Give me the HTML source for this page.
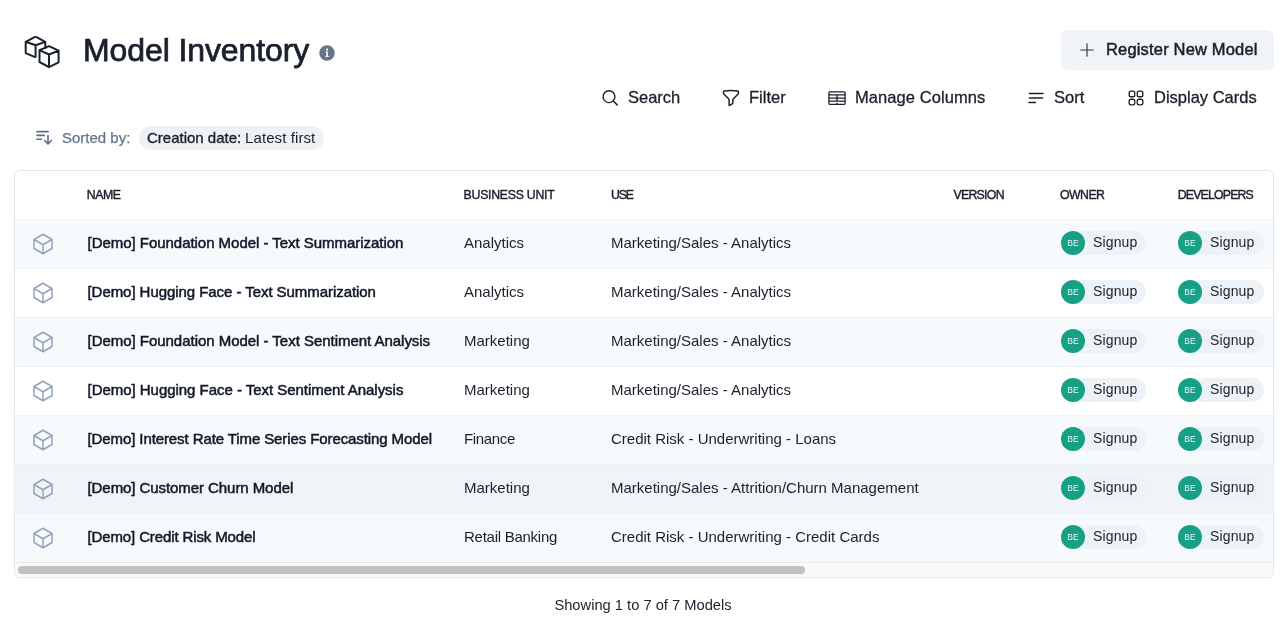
<!DOCTYPE html>
<html>
<head>
<meta charset="utf-8">
<style>
*{box-sizing:border-box;margin:0;padding:0}
html,body{width:1288px;height:636px;overflow:hidden;background:#fff}
body{font-family:"Liberation Sans",sans-serif;color:#1a202c;position:relative}
.a{position:absolute;white-space:nowrap;line-height:1}
svg{position:absolute;overflow:visible}
.title{left:83px;top:34px;font-size:32px;letter-spacing:-0.1px;-webkit-text-stroke:0.75px #1a202c;color:#1a202c}
.btn{left:1061px;top:30px;width:213px;height:40px;background:#f0f4f9;border-radius:7px}
.btxt{left:1106px;top:41px;font-size:16.5px;letter-spacing:0.17px;-webkit-text-stroke:0.5px #1a202c}
.tb{top:89px;font-size:16.5px;-webkit-text-stroke:0.3px #1a202c}
.sb{left:62px;top:130px;font-size:15px;color:#64748b;-webkit-text-stroke:0.25px #64748b}
.pill{left:139px;top:126px;width:185px;height:24px;background:#edf2f7;border-radius:12px}
.cd{left:147px;top:130px;font-size:15px;-webkit-text-stroke:0.35px #1a202c}
.lf{left:245px;top:130px;font-size:15px;letter-spacing:0.1px;color:#1a202c}
.tbl{left:14px;top:170px;width:1260px;height:408px;border:1px solid #e2e8f0;border-radius:6px;overflow:hidden;background:#fff}
.row{position:absolute;left:0;width:1258px;height:49px;border-top:1px solid #edf2f7}
.hd{top:191px;font-size:12.3px;letter-spacing:-0.15px;-webkit-text-stroke:0.4px #1a202c}
.nm{font-size:15px;color:#111827;-webkit-text-stroke:0.5px #111827;letter-spacing:-0.07px}
.tx{font-size:15px;color:#1a202c}
.chip{position:absolute;height:24px;border-radius:12px;background:#edf2f7}
.av{position:absolute;width:24px;height:24px;border-radius:12px;background:#17a086;color:#e8f7f2;font-size:8.5px;line-height:24px;text-align:center}
.sg{font-size:14px;letter-spacing:0.15px;color:#1a202c}
.foot{left:-1px;width:1288px;text-align:center;top:598px;font-size:14.7px;color:#1a202c}
.sbar{position:absolute;left:0;top:391px;width:1258px;height:15px;background:#fafafa;border-top:1px solid #e8e8e8}
.thumb{position:absolute;left:3px;top:3px;width:787px;height:8px;border-radius:4px;background:#c1c1c1}
</style>
</head>
<body>
<div id="wrap" style="position:absolute;left:0;top:0;width:1288px;height:636px;will-change:transform">
<!-- header icon -->
<svg width="40" height="40" style="left:22px;top:32px" viewBox="22 32 40 40">
<g fill="none" stroke="#1a202c" stroke-width="2" stroke-linejoin="round">
<path d="M35.6 36.7 L25.7 41.8 L25.7 53.1 L35.6 57.4 M35.6 36.7 L45.3 41.9 L45.3 49 M25.7 41.8 L35.6 45.3 L45.3 41.9 M35.6 45.3 L35.6 57.4"/>
<path d="M49 46.1 L39.5 50.2 L39.5 62 L49 67.1 L58.6 62.3 L58.6 50.6 Z M39.5 50.2 L49 54.5 L58.6 50.6 M49 54.5 L49 67.1"/>
</g>
</svg>
<div class="a title">Model Inventory</div>
<svg width="16" height="16" style="left:319px;top:45px" viewBox="0 0 16 16">
<circle cx="8" cy="8" r="7.7" fill="#64748b"/>
<path d="M6.6 6.4h2.3v4.6h0.9v1h-3.4v-1h0.9v-3.6h-0.7z" fill="#fff"/>
<circle cx="8.1" cy="4.6" r="1.1" fill="#fff"/>
</svg>

<div class="a btn"></div>
<svg width="20" height="20" style="left:1077px;top:39.6px" viewBox="0 0 24 24"><path d="M12 4.5v15m7.5-7.5h-15" fill="none" stroke="#2d3748" stroke-width="1.4" stroke-linecap="round" stroke-linejoin="round"/></svg>
<div class="a btxt">Register New Model</div>

<!-- toolbar -->
<svg width="18" height="18" style="left:601px;top:89px" viewBox="0 0 18 18">
<circle cx="8" cy="7.7" r="5.9" fill="none" stroke="#1a202c" stroke-width="1.4"/>
<path d="M12.3 12L16.2 15.9" stroke="#1a202c" stroke-width="1.5" stroke-linecap="round"/>
</svg>
<div class="a tb" style="left:628px">Search</div>
<svg width="20" height="20" style="left:721.2px;top:87.8px" viewBox="0 0 24 24"><path d="M12 3c2.755 0 5.455.232 8.083.678.533.09.917.556.917 1.096v1.044a2.25 2.25 0 01-.659 1.591l-5.432 5.432a2.25 2.25 0 00-.659 1.591v2.927a2.25 2.25 0 01-1.244 2.013L9.75 21v-6.568a2.25 2.25 0 00-.659-1.591L3.659 7.409A2.25 2.25 0 013 5.818V4.774c0-.54.384-1.006.917-1.096A48.32 48.32 0 0112 3z" fill="none" stroke="#1a202c" stroke-width="1.8" stroke-linecap="round" stroke-linejoin="round"/></svg>
<div class="a tb" style="left:749px">Filter</div>
<svg width="20" height="20" style="left:827.05px;top:87.97px" viewBox="0 0 24 24"><path d="M3.375 19.5h17.25m-17.25 0a1.125 1.125 0 01-1.125-1.125M3.375 19.5h7.5c.621 0 1.125-.504 1.125-1.125m-9.75 0V5.625m0 12.75v-1.5c0-.621.504-1.125 1.125-1.125m18.375 2.625V5.625m0 12.75c0 .621-.504 1.125-1.125 1.125m1.125-1.125v-1.5c0-.621-.504-1.125-1.125-1.125m0 3.75h-7.5A1.125 1.125 0 0112 18.375m9.75-12.75c0-.621-.504-1.125-1.125-1.125H3.375c-.621 0-1.125.504-1.125 1.125m19.5 0v1.5c0 .621-.504 1.125-1.125 1.125M2.25 5.625v1.5c0 .621.504 1.125 1.125 1.125m0 0h17.25m-17.25 0h7.5c.621 0 1.125.504 1.125 1.125M3.375 8.25c-.621 0-1.125.504-1.125 1.125v1.5c0 .621.504 1.125 1.125 1.125m17.25-3.75h-7.5c-.621 0-1.125.504-1.125 1.125m8.625-1.125c.621 0 1.125.504 1.125 1.125v1.5c0 .621-.504 1.125-1.125 1.125m-17.25 0h7.5m-7.5 0c-.621 0-1.125.504-1.125 1.125v1.5c0 .621.504 1.125 1.125 1.125M12 10.875v-1.5m0 1.5c0 .621-.504 1.125-1.125 1.125M12 10.875c0 .621.504 1.125 1.125 1.125m-2.25 0c.621 0 1.125.504 1.125 1.125M13.125 12h7.5m-7.5 0c-.621 0-1.125.504-1.125 1.125M20.625 12c.621 0 1.125.504 1.125 1.125v1.5c0 .621-.504 1.125-1.125 1.125m-17.25 0h7.5M12 14.625v-1.5m0 1.5c0 .621-.504 1.125-1.125 1.125m1.125-1.125c0 .621.504 1.125 1.125 1.125m0 0h7.5" fill="none" stroke="#1a202c" stroke-width="1.5" stroke-linecap="round" stroke-linejoin="round"/></svg>
<div class="a tb" style="left:855px;letter-spacing:0.08px">Manage Columns</div>
<svg width="18" height="18" style="left:1027px;top:88px" viewBox="0 0 18 18">
<path d="M2.4 5.5H16M2.4 9.9H15.6M1.9 14.4H8.4" stroke="#1a202c" stroke-width="1.5" stroke-linecap="round" fill="none"/>
</svg>
<div class="a tb" style="left:1054px">Sort</div>
<svg width="20" height="20" style="left:1126.1px;top:88.3px" viewBox="0 0 24 24"><path d="M3.75 6A2.25 2.25 0 016 3.75h2.25A2.25 2.25 0 0110.5 6v2.25a2.25 2.25 0 01-2.25 2.25H6a2.25 2.25 0 01-2.25-2.25V6zM3.75 15.75A2.25 2.25 0 016 13.5h2.25a2.25 2.25 0 012.25 2.25V18a2.25 2.25 0 01-2.25 2.25H6A2.25 2.25 0 013.75 18v-2.25zM13.5 6a2.25 2.25 0 012.25-2.25H18A2.25 2.25 0 0120.25 6v2.25A2.25 2.25 0 0118 10.5h-2.25a2.25 2.25 0 01-2.25-2.25V6zM13.5 15.75a2.25 2.25 0 012.25-2.25H18a2.25 2.25 0 012.25 2.25V18A2.25 2.25 0 0118 20.25h-2.25A2.25 2.25 0 0113.5 18v-2.25z" fill="none" stroke="#1a202c" stroke-width="1.55" stroke-linecap="round" stroke-linejoin="round"/></svg>
<div class="a tb" style="left:1154px">Display Cards</div>

<!-- sorted by -->
<svg width="20" height="18" style="left:34px;top:128px" viewBox="0 0 20 18">
<g fill="none" stroke="#5f6f88" stroke-width="1.6" stroke-linecap="round" stroke-linejoin="round">
<path d="M2.9 3.6H14.2M2.9 7.4H10.2M2.9 11.2H7.4M14 7.6V15.8M10.6 12.5L14 15.9L17.4 12.5"/>
</g>
</svg>
<div class="a sb">Sorted by:</div>
<div class="a pill"></div>
<div class="a cd">Creation date:</div>
<div class="a lf">Latest first</div>

<!-- table -->
<div class="a tbl" id="tbl">
<div class="a hd" style="left:71.7px;top:18px;letter-spacing:-0.42px">NAME</div>
<div class="a hd" style="left:448.6px;top:18px;letter-spacing:-0.26px">BUSINESS UNIT</div>
<div class="a hd" style="left:596.1px;top:18px;letter-spacing:-1.25px">USE</div>
<div class="a hd" style="left:938.5px;top:18px;letter-spacing:-0.72px">VERSION</div>
<div class="a hd" style="left:1045.0px;top:18px;letter-spacing:-0.55px">OWNER</div>
<div class="a hd" style="left:1162.8px;top:18px;letter-spacing:-0.82px">DEVELOPERS</div>
<div class="row" style="top:48px;background:#f7fafc"><svg width="24" height="24" style="left:16.2px;top:12.3px" viewBox="0 0 24 24"><path d="M21 7.5l-9-5.25L3 7.5m18 0l-9 5.25m9-5.25v9l-9 5.25M3 7.5l9 5.25M3 7.5v9l9 5.25m0-9v9" fill="none" stroke="#94a3b8" stroke-width="1.5" stroke-linecap="round" stroke-linejoin="round"/></svg><div class="a nm" style="left:72.5px;top:14.5px;letter-spacing:-0.035px">[Demo] Foundation Model - Text Summarization</div><div class="a tx" style="left:449px;top:14.5px;letter-spacing:0px">Analytics</div><div class="a tx" style="left:596px;top:14.5px">Marketing/Sales - Analytics</div><div class="chip" style="left:1046px;top:11px;width:85px"></div><div class="av" style="left:1046px;top:11px">BE</div><div class="a sg" style="left:1078px;top:15px">Signup</div><div class="chip" style="left:1163px;top:11px;width:86px"></div><div class="av" style="left:1163px;top:11px">BE</div><div class="a sg" style="left:1195px;top:15px">Signup</div></div>
<div class="row" style="top:97px;background:#fff"><svg width="24" height="24" style="left:16.2px;top:12.3px" viewBox="0 0 24 24"><path d="M21 7.5l-9-5.25L3 7.5m18 0l-9 5.25m9-5.25v9l-9 5.25M3 7.5l9 5.25M3 7.5v9l9 5.25m0-9v9" fill="none" stroke="#94a3b8" stroke-width="1.5" stroke-linecap="round" stroke-linejoin="round"/></svg><div class="a nm" style="left:72.5px;top:14.5px;letter-spacing:-0.057px">[Demo] Hugging Face - Text Summarization</div><div class="a tx" style="left:449px;top:14.5px;letter-spacing:0px">Analytics</div><div class="a tx" style="left:596px;top:14.5px">Marketing/Sales - Analytics</div><div class="chip" style="left:1046px;top:11px;width:85px"></div><div class="av" style="left:1046px;top:11px">BE</div><div class="a sg" style="left:1078px;top:15px">Signup</div><div class="chip" style="left:1163px;top:11px;width:86px"></div><div class="av" style="left:1163px;top:11px">BE</div><div class="a sg" style="left:1195px;top:15px">Signup</div></div>
<div class="row" style="top:146px;background:#f7fafc"><svg width="24" height="24" style="left:16.2px;top:12.3px" viewBox="0 0 24 24"><path d="M21 7.5l-9-5.25L3 7.5m18 0l-9 5.25m9-5.25v9l-9 5.25M3 7.5l9 5.25M3 7.5v9l9 5.25m0-9v9" fill="none" stroke="#94a3b8" stroke-width="1.5" stroke-linecap="round" stroke-linejoin="round"/></svg><div class="a nm" style="left:72.5px;top:14.5px;letter-spacing:-0.030px">[Demo] Foundation Model - Text Sentiment Analysis</div><div class="a tx" style="left:449px;top:14.5px;letter-spacing:0px">Marketing</div><div class="a tx" style="left:596px;top:14.5px">Marketing/Sales - Analytics</div><div class="chip" style="left:1046px;top:11px;width:85px"></div><div class="av" style="left:1046px;top:11px">BE</div><div class="a sg" style="left:1078px;top:15px">Signup</div><div class="chip" style="left:1163px;top:11px;width:86px"></div><div class="av" style="left:1163px;top:11px">BE</div><div class="a sg" style="left:1195px;top:15px">Signup</div></div>
<div class="row" style="top:195px;background:#fff"><svg width="24" height="24" style="left:16.2px;top:12.3px" viewBox="0 0 24 24"><path d="M21 7.5l-9-5.25L3 7.5m18 0l-9 5.25m9-5.25v9l-9 5.25M3 7.5l9 5.25M3 7.5v9l9 5.25m0-9v9" fill="none" stroke="#94a3b8" stroke-width="1.5" stroke-linecap="round" stroke-linejoin="round"/></svg><div class="a nm" style="left:72.5px;top:14.5px;letter-spacing:-0.034px">[Demo] Hugging Face - Text Sentiment Analysis</div><div class="a tx" style="left:449px;top:14.5px;letter-spacing:0px">Marketing</div><div class="a tx" style="left:596px;top:14.5px">Marketing/Sales - Analytics</div><div class="chip" style="left:1046px;top:11px;width:85px"></div><div class="av" style="left:1046px;top:11px">BE</div><div class="a sg" style="left:1078px;top:15px">Signup</div><div class="chip" style="left:1163px;top:11px;width:86px"></div><div class="av" style="left:1163px;top:11px">BE</div><div class="a sg" style="left:1195px;top:15px">Signup</div></div>
<div class="row" style="top:244px;background:#f7fafc"><svg width="24" height="24" style="left:16.2px;top:12.3px" viewBox="0 0 24 24"><path d="M21 7.5l-9-5.25L3 7.5m18 0l-9 5.25m9-5.25v9l-9 5.25M3 7.5l9 5.25M3 7.5v9l9 5.25m0-9v9" fill="none" stroke="#94a3b8" stroke-width="1.5" stroke-linecap="round" stroke-linejoin="round"/></svg><div class="a nm" style="left:72.5px;top:14.5px;letter-spacing:-0.097px">[Demo] Interest Rate Time Series Forecasting Model</div><div class="a tx" style="left:449px;top:14.5px;letter-spacing:-0.33px">Finance</div><div class="a tx" style="left:596px;top:14.5px">Credit Risk - Underwriting - Loans</div><div class="chip" style="left:1046px;top:11px;width:85px"></div><div class="av" style="left:1046px;top:11px">BE</div><div class="a sg" style="left:1078px;top:15px">Signup</div><div class="chip" style="left:1163px;top:11px;width:86px"></div><div class="av" style="left:1163px;top:11px">BE</div><div class="a sg" style="left:1195px;top:15px">Signup</div></div>
<div class="row" style="top:293px;background:#f0f4f8"><svg width="24" height="24" style="left:16.2px;top:12.3px" viewBox="0 0 24 24"><path d="M21 7.5l-9-5.25L3 7.5m18 0l-9 5.25m9-5.25v9l-9 5.25M3 7.5l9 5.25M3 7.5v9l9 5.25m0-9v9" fill="none" stroke="#94a3b8" stroke-width="1.5" stroke-linecap="round" stroke-linejoin="round"/></svg><div class="a nm" style="left:72.5px;top:14.5px;letter-spacing:-0.070px">[Demo] Customer Churn Model</div><div class="a tx" style="left:449px;top:14.5px;letter-spacing:0px">Marketing</div><div class="a tx" style="left:596px;top:14.5px">Marketing/Sales - Attrition/Churn Management</div><div class="chip" style="left:1046px;top:11px;width:85px"></div><div class="av" style="left:1046px;top:11px">BE</div><div class="a sg" style="left:1078px;top:15px">Signup</div><div class="chip" style="left:1163px;top:11px;width:86px"></div><div class="av" style="left:1163px;top:11px">BE</div><div class="a sg" style="left:1195px;top:15px">Signup</div></div>
<div class="row" style="top:342px;background:#f7fafc"><svg width="24" height="24" style="left:16.2px;top:12.3px" viewBox="0 0 24 24"><path d="M21 7.5l-9-5.25L3 7.5m18 0l-9 5.25m9-5.25v9l-9 5.25M3 7.5l9 5.25M3 7.5v9l9 5.25m0-9v9" fill="none" stroke="#94a3b8" stroke-width="1.5" stroke-linecap="round" stroke-linejoin="round"/></svg><div class="a nm" style="left:72.5px;top:14.5px;letter-spacing:-0.122px">[Demo] Credit Risk Model</div><div class="a tx" style="left:449px;top:14.5px;letter-spacing:-0.26px">Retail Banking</div><div class="a tx" style="left:596px;top:14.5px">Credit Risk - Underwriting - Credit Cards</div><div class="chip" style="left:1046px;top:11px;width:85px"></div><div class="av" style="left:1046px;top:11px">BE</div><div class="a sg" style="left:1078px;top:15px">Signup</div><div class="chip" style="left:1163px;top:11px;width:86px"></div><div class="av" style="left:1163px;top:11px">BE</div><div class="a sg" style="left:1195px;top:15px">Signup</div></div>
<div class="sbar"><div class="thumb"></div></div>
</div>

<div class="a foot">Showing 1 to 7 of 7 Models</div>
</div>
</body>
</html>
